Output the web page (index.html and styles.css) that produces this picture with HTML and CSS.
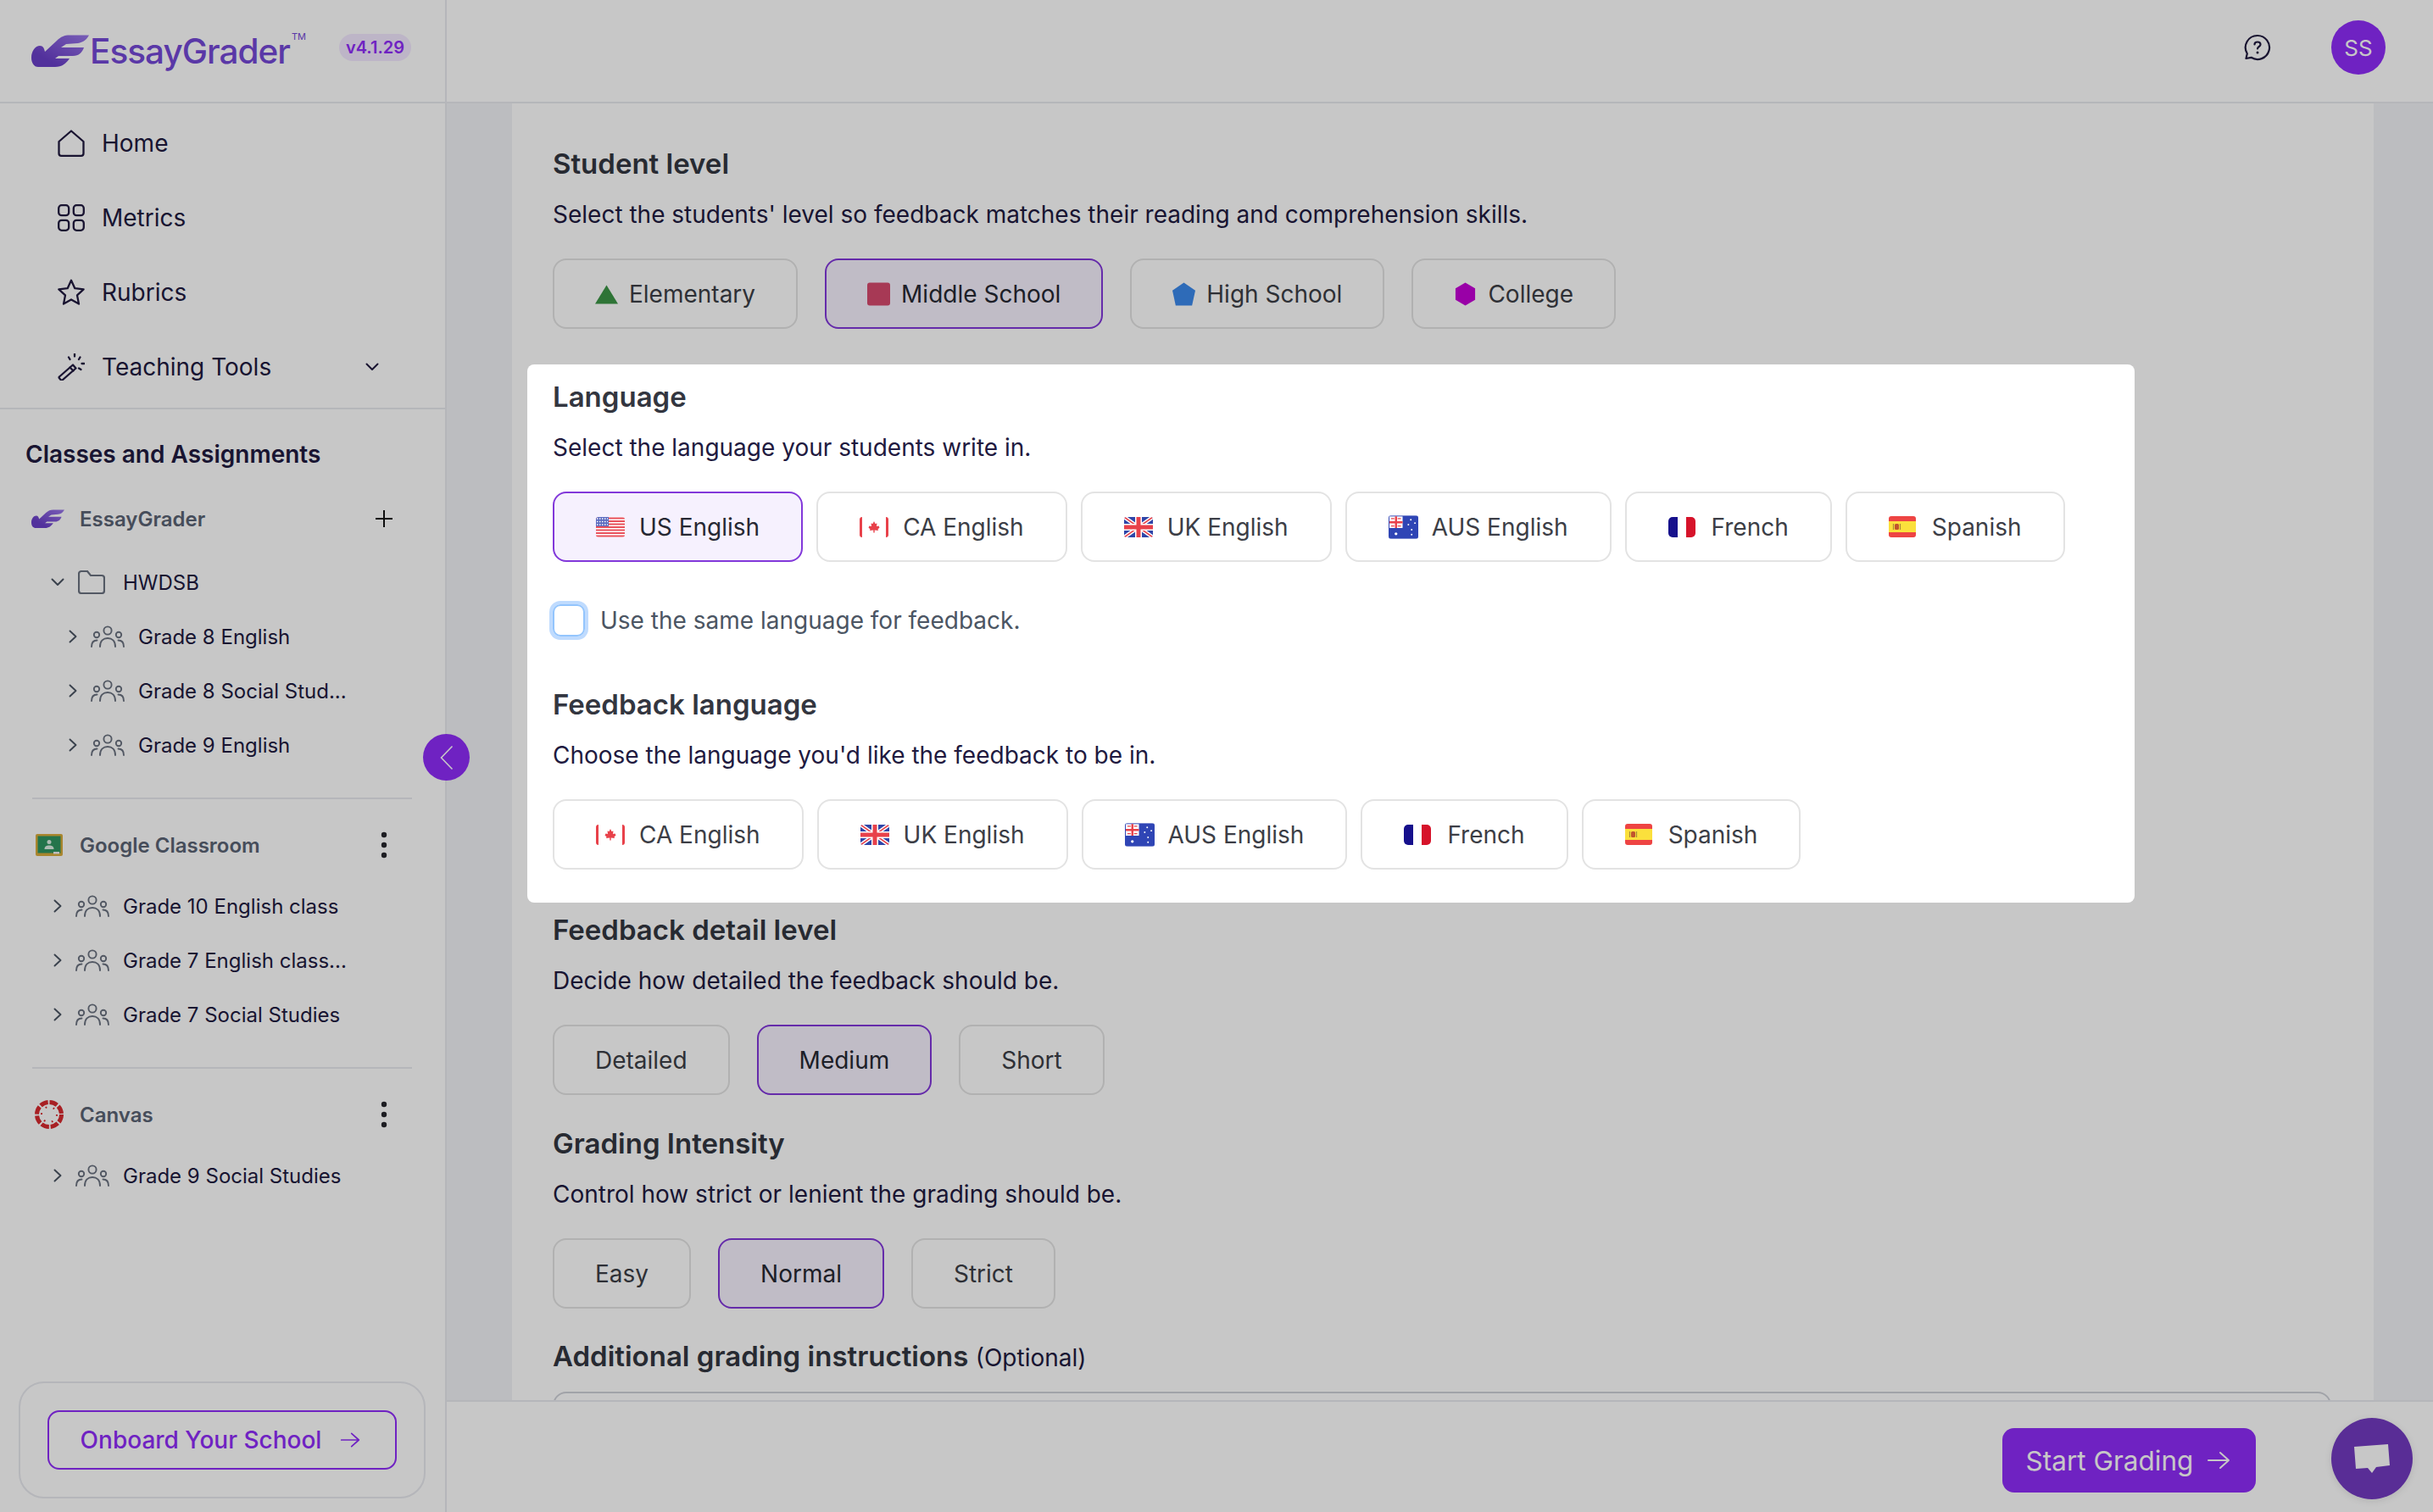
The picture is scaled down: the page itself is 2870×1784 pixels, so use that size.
FILE: index.html
```html
<!DOCTYPE html>
<html lang="en">

<head>
    <meta charset="UTF-8">
    <meta name="viewport" content="width=device-width, initial-scale=1.0">
    <title>EssayGrader</title>
    <link rel="stylesheet" href="styles.css">
</head>

<body>
    <!-- Shared icons -->
    <svg class="icon-defs" aria-hidden="true">
        <defs>
            <linearGradient id="wingFill" x1="0" y1="1" x2="1" y2="0">
                <stop offset="0.25" stop-color="#6a3fc8" />
                <stop offset="0.5" stop-color="#7b52d4" />
                <stop offset="1" stop-color="#9a78ea" />
            </linearGradient>
        </defs>
        <symbol id="wing" viewBox="0 0 68 38">
            <path fill="url(#wingFill)" d="M0 27C0 19 5 13 10 13C14 13 15 16 16 20L30 7C35 2 39 .5 45 .5L68 .5C65 6 61 9 55 10L41 11L35 15L62 15C60 21 56 25 49 25L32 25L28 28L45 28C41 34 36 38 28 38L8 38C3 38 0 33 0 27Z" />
        </symbol>
        <symbol id="group" viewBox="0 0 40 26">
            <g fill="none" stroke="#6b7280" stroke-width="1.9" stroke-linecap="round">
                <circle cx="20" cy="6" r="4.6" />
                <circle cx="7" cy="11" r="3.2" />
                <circle cx="33" cy="11" r="3.2" />
                <path d="M11 25C11 18 15 15 20 15C25 15 29 18 29 25" />
                <path d="M1 25C1 20 3.5 17.5 7.5 17.5" />
                <path d="M39 25C39 20 36.5 17.5 32.500 17.5" />
            </g>
        </symbol>
        <symbol id="chev-right" viewBox="0 0 10 16">
            <path d="M1.500 1.500L8.500 8L1.500 14.500" fill="none" stroke="#4b5563" stroke-width="1.900" stroke-linecap="round" stroke-linejoin="round" />
        </symbol>
        <symbol id="dots" viewBox="0 0 8 32">
            <circle cx="4" cy="4" r="3.200" fill="#26262c" />
            <circle cx="4" cy="16" r="3.200" fill="#26262c" />
            <circle cx="4" cy="28" r="3.200" fill="#26262c" />
        </symbol>
        <symbol id="arrow" viewBox="0 0 28 22">
            <path d="M2 11H26M16 2L26 11L16 20" fill="none" stroke="currentColor" stroke-width="2" stroke-linecap="round" stroke-linejoin="round" />
        </symbol>

        <!-- Flags -->
        <symbol id="flag-us" viewBox="0 0 34 24">
            <rect width="34" height="24" fill="#fff" />
            <path d="M0 1.500H34M0 5H34M0 8.500H34M0 12H34M0 15.500H34M0 19H34M0 22.500H34" stroke="#e8505b" stroke-width="1.800" />
            <rect width="15" height="11" fill="#5b6bc0" />
            <path d="M1 2H14M1 5.500H14M1 9H14" stroke="#fff" stroke-width="1.400" stroke-dasharray="1.500 1.500" />
        </symbol>
        <symbol id="flag-ca" viewBox="0 0 34 24">
            <rect width="34" height="24" fill="#fff" />
            <rect width="3" height="24" fill="#e8414a" />
            <rect x="31" width="3" height="24" fill="#e8414a" />
            <path d="M17 5L18.500 8L20.500 7.500L20 11L22.500 10.500L23.500 12.500L21.500 14.500L22 16L17.700 15.500V18.500H16.300V15.500L12 16L12.500 14.500L10.500 12.500L11.500 10.500L14 11L13.500 7.500L15.500 8Z" fill="#e8414a" />
        </symbol>
        <symbol id="flag-uk" viewBox="0 0 34 24">
            <rect width="34" height="24" fill="#2f45a8" />
            <path d="M0 0L34 24M34 0L0 24" stroke="#fff" stroke-width="4.500" />
            <path d="M0 0L34 24M34 0L0 24" stroke="#e8414a" stroke-width="1.600" />
            <path d="M17 0V24M0 12H34" stroke="#fff" stroke-width="8" />
            <path d="M17 0V24M0 12H34" stroke="#e8414a" stroke-width="5" />
        </symbol>
        <symbol id="flag-aus" viewBox="0 0 36 28">
            <rect width="36" height="28" fill="#2f45b5" />
            <rect x="1" y="1" width="16" height="14" fill="#fff" />
            <path d="M9 1V15M1 8H17" stroke="#e8414a" stroke-width="2.500" />
            <path d="M3 3.500H7M3 12.500H7M11 3.500H15M11 12.500H15" stroke="#e8414a" stroke-width="1.200" />
            <g fill="#fff">
                <circle cx="9" cy="22" r="1.700" />
                <circle cx="27" cy="5" r="1" />
                <circle cx="32" cy="9" r="1" />
                <circle cx="24" cy="11" r="1" />
                <circle cx="28" cy="17" r="1" />
                <circle cx="28" cy="23" r="1" />
            </g>
        </symbol>
        <symbol id="flag-fr" viewBox="0 0 32 24">
            <rect width="11" height="24" fill="#16108c" />
            <rect x="11" width="10" height="24" fill="#fff" />
            <rect x="21" width="11" height="24" fill="#d6132a" />
        </symbol>
        <symbol id="flag-es" viewBox="0 0 32 25">
            <rect width="32" height="25" fill="#ee4443" />
            <rect y="6" width="32" height="13" fill="#fbe03c" />
            <rect x="7" y="9" width="5" height="7" rx="1.500" fill="#c1552d" />
            <path d="M5.500 9V16M13.500 9V16" stroke="#a88a3a" stroke-width="1.200" />
        </symbol>
    </svg>

    <div class="app">
        <!-- Top bar -->
        <header class="topbar">
            <div class="brand">
                <svg class="brand-logo"><use href="#wing" /></svg>
                <span class="brand-name">EssayGrader</span>
                <span class="brand-tm">TM</span>
                <span class="version">v4.1.29</span>
            </div>
            <div class="topbar-right">
                <svg class="help-icon" viewBox="0 0 32 32">
                    <path d="M16 2A14 14 0 1 1 8.500 27.800L2.500 29L3.800 23.200A14 14 0 0 1 16 2Z" fill="none" stroke="#211a3f" stroke-width="2.200" stroke-linejoin="round" />
                    <path d="M12.500 12.500C12.500 10.500 14 9.500 16 9.500C18 9.500 19.500 10.700 19.500 12.500C19.500 15 16 15 16 17.500" fill="none" stroke="#211a3f" stroke-width="2.200" stroke-linecap="round" />
                    <circle cx="16" cy="22" r="1.500" fill="#211a3f" />
                </svg>
                <div class="avatar">SS</div>
            </div>
        </header>

        <div class="workspace">
            <!-- Sidebar -->
            <aside class="sidebar">
                <nav class="nav">
                    <a class="nav-item">
                        <svg class="nav-icon" viewBox="0 0 32 32"><path d="M1.500 14L16 1.500L30.500 14V28A2.800 2.800 0 0 1 27.700 30.800H4.300A2.800 2.800 0 0 1 1.500 28Z" /></svg>
                        Home
                    </a>
                    <a class="nav-item">
                        <svg class="nav-icon" viewBox="0 0 32 32">
                            <rect x="1.200" y="1.200" width="12" height="12" rx="3.500" />
                            <rect x="18.800" y="1.200" width="12" height="12" rx="3.500" />
                            <rect x="1.200" y="18.800" width="12" height="12" rx="3.500" />
                            <rect x="18.800" y="18.800" width="12" height="12" rx="3.500" />
                        </svg>
                        Metrics
                    </a>
                    <a class="nav-item">
                        <svg class="nav-icon" viewBox="0 0 32 32"><path d="M16 1.800L20.300 11.200L30.600 12.400L23 19.400L25 29.600L16 24.500L7 29.600L9 19.400L1.400 12.400L11.700 11.200Z" /></svg>
                        Rubrics
                    </a>
                    <a class="nav-item">
                        <svg class="nav-icon" viewBox="0 0 32 32">
                            <path d="M2 27.500L18 13.500L21.500 17.500L5.500 31.500A1 1 0 0 1 4 31.500L1.800 29A1 1 0 0 1 2 27.500Z" />
                            <path d="M14.500 16.500L18.500 20.500M13 4.500L14.500 7M20 .500V3.500M26.500 4.500L25 7M31.500 12H28.500M27.500 19L25 17.500" />
                        </svg>
                        Teaching Tools
                        <svg class="nav-caret" viewBox="0 0 16 10"><path d="M1.500 1.500L8 8L14.500 1.500" /></svg>
                    </a>
                </nav>

                <h3 class="tree-title">Classes and Assignments</h3>

                <div class="tree-head">
                    <svg class="source-logo wing-small"><use href="#wing" /></svg>
                    <span class="source-name">EssayGrader</span>
                    <svg class="plus" viewBox="0 0 20 20"><path d="M10 0V20M0 10H20" /></svg>
                </div>
                <div class="tree-folder">
                    <svg class="folder-caret" viewBox="0 0 16 10"><path d="M1.500 1.500L8 8L14.500 1.500" /></svg>
                    <svg class="folder-icon" viewBox="0 0 32 28"><path d="M1 4A3 3 0 0 1 4 1H11L15 6H28A3 3 0 0 1 31 9V24A3 3 0 0 1 28 27H4A3 3 0 0 1 1 24Z" /></svg>
                    <span>HWDSB</span>
                </div>
                <div class="tree-row nested">
                    <svg class="row-chev"><use href="#chev-right" /></svg>
                    <svg class="row-group"><use href="#group" /></svg>
                    <span>Grade 8 English</span>
                </div>
                <div class="tree-row nested">
                    <svg class="row-chev"><use href="#chev-right" /></svg>
                    <svg class="row-group"><use href="#group" /></svg>
                    <span>Grade 8 Social Stud...</span>
                </div>
                <div class="tree-row nested">
                    <svg class="row-chev"><use href="#chev-right" /></svg>
                    <svg class="row-group"><use href="#group" /></svg>
                    <span>Grade 9 English</span>
                </div>

                <div class="tree-divider"></div>

                <div class="tree-head">
                    <svg class="source-logo" viewBox="0 0 32 26">
                        <rect width="32" height="26" rx="2" fill="#d9ac3c" />
                        <rect x="2.500" y="2.500" width="27" height="20" fill="#2f9560" />
                        <circle cx="16" cy="9.500" r="2.500" fill="#dff0e6" />
                        <path d="M10.500 18C10.500 14.500 13 13.500 16 13.500C19 13.500 21.500 14.500 21.500 18Z" fill="#dff0e6" />
                        <rect x="21" y="21" width="7" height="2.500" fill="#f3f3f3" />
                    </svg>
                    <span class="source-name">Google Classroom</span>
                    <svg class="dots"><use href="#dots" /></svg>
                </div>
                <div class="tree-row">
                    <svg class="row-chev"><use href="#chev-right" /></svg>
                    <svg class="row-group"><use href="#group" /></svg>
                    <span>Grade 10 English class</span>
                </div>
                <div class="tree-row">
                    <svg class="row-chev"><use href="#chev-right" /></svg>
                    <svg class="row-group"><use href="#group" /></svg>
                    <span>Grade 7 English class...</span>
                </div>
                <div class="tree-row">
                    <svg class="row-chev"><use href="#chev-right" /></svg>
                    <svg class="row-group"><use href="#group" /></svg>
                    <span>Grade 7 Social Studies</span>
                </div>

                <div class="tree-divider"></div>

                <div class="tree-head">
                    <svg class="source-logo canvas-logo" viewBox="0 0 34 34">
                        <circle cx="17" cy="17" r="14.500" fill="none" stroke="#d8292f" stroke-width="5" stroke-dasharray="9.500 1.900" />
                        <circle cx="17" cy="17" r="9" fill="none" stroke="#d8292f" stroke-width="2" stroke-dasharray="1.800 7.600" />
                    </svg>
                    <span class="source-name">Canvas</span>
                    <svg class="dots"><use href="#dots" /></svg>
                </div>
                <div class="tree-row">
                    <svg class="row-chev"><use href="#chev-right" /></svg>
                    <svg class="row-group"><use href="#group" /></svg>
                    <span>Grade 9 Social Studies</span>
                </div>

                <div class="onboard-card">
                    <button class="onboard-btn">
                        Onboard Your School
                        <svg class="onboard-arrow"><use href="#arrow" /></svg>
                    </button>
                </div>
            </aside>

            <!-- Collapse handle on the sidebar edge -->
            <button class="collapse-btn">
                <svg viewBox="0 0 16 30"><path d="M14.500 1.500L1.500 15L14.500 28.500" /></svg>
            </button>

            <main class="main">
                <div class="scroll-area">
                    <div class="card">
                        <section class="section section-level">
                            <h2>Student level</h2>
                            <p>Select the students' level so feedback matches their reading and comprehension skills.</p>
                            <div class="options">
                                <button class="option">
                                    <svg class="shape" viewBox="0 0 28 28"><path d="M14 3L28 26H0Z" fill="#3c9546" /></svg>
                                    Elementary
                                </button>
                                <button class="option selected">
                                    <svg class="shape" viewBox="0 0 28 28"><rect width="28" height="28" rx="3" fill="#d74a6d" /></svg>
                                    Middle School
                                </button>
                                <button class="option">
                                    <svg class="shape" viewBox="0 0 28 28"><path d="M14 0L28 9.500L24 28H4L0 9.500Z" fill="#3c89ec" /></svg>
                                    High School
                                </button>
                                <button class="option">
                                    <svg class="shape" viewBox="0 0 28 28"><path d="M14 0L26 7V21L14 28L2 21V7Z" fill="#c500d7" /></svg>
                                    College
                                </button>
                            </div>
                        </section>

                        <!-- Highlighted by the tour, sits above the dim layer -->
                        <section class="spotlight">
                            <h2>Language</h2>
                            <p>Select the language your students write in.</p>
                            <div class="options lang-options">
                                <button class="option selected"><svg class="flag"><use href="#flag-us" /></svg>US English</button>
                                <button class="option"><svg class="flag"><use href="#flag-ca" /></svg>CA English</button>
                                <button class="option"><svg class="flag"><use href="#flag-uk" /></svg>UK English</button>
                                <button class="option"><svg class="flag flag-aus"><use href="#flag-aus" /></svg>AUS English</button>
                                <button class="option"><svg class="flag flag-fr"><use href="#flag-fr" /></svg>French</button>
                                <button class="option"><svg class="flag flag-es"><use href="#flag-es" /></svg>Spanish</button>
                            </div>
                            <label class="same-lang">
                                <span class="checkbox"></span>
                                Use the same language for feedback.
                            </label>
                            <h2 class="feedback-lang">Feedback language</h2>
                            <p>Choose the language you'd like the feedback to be in.</p>
                            <div class="options lang-options">
                                <button class="option"><svg class="flag"><use href="#flag-ca" /></svg>CA English</button>
                                <button class="option"><svg class="flag"><use href="#flag-uk" /></svg>UK English</button>
                                <button class="option"><svg class="flag flag-aus"><use href="#flag-aus" /></svg>AUS English</button>
                                <button class="option"><svg class="flag flag-fr"><use href="#flag-fr" /></svg>French</button>
                                <button class="option"><svg class="flag flag-es"><use href="#flag-es" /></svg>Spanish</button>
                            </div>
                        </section>

                        <section class="section">
                            <h2>Feedback detail level</h2>
                            <p>Decide how detailed the feedback should be.</p>
                            <div class="options">
                                <button class="option">Detailed</button>
                                <button class="option selected">Medium</button>
                                <button class="option">Short</button>
                            </div>
                        </section>

                        <section class="section section-intensity">
                            <h2>Grading Intensity</h2>
                            <p>Control how strict or lenient the grading should be.</p>
                            <div class="options">
                                <button class="option">Easy</button>
                                <button class="option selected">Normal</button>
                                <button class="option">Strict</button>
                            </div>
                        </section>

                        <section class="section">
                            <h2>Additional grading instructions <span class="optional">(Optional)</span></h2>
                            <div class="textarea"></div>
                        </section>
                    </div>
                </div>

                <footer class="footer">
                    <button class="start-btn">
                        Start Grading
                        <svg class="start-arrow"><use href="#arrow" /></svg>
                    </button>
                </footer>
            </main>
        </div>
    </div>

    <button class="chat-btn">
        <svg viewBox="0 0 42 34"><path d="M0 3L40 0L42 25L26 27L21 34L16 28L2 29Z" /></svg>
    </button>

    <div class="dim"></div>
</body>

</html>
```

FILE: styles.css
```css
/* General Reset */
* {
    margin: 0;
    padding: 0;
    box-sizing: border-box;
}

body {
    font-family: 'Inter', 'Liberation Sans', sans-serif;
    background-color: #fff;
    color: #211a3f;
    height: 100vh;
    overflow: hidden;
}

button {
    font-family: inherit;
    background: none;
    border: none;
}

.icon-defs {
    position: absolute;
    width: 0;
    height: 0;
}

/* Dim layer for the tour */
.dim {
    position: fixed;
    inset: 0;
    background: rgba(0, 0, 0, 0.22);
    z-index: 5;
}

.app {
    display: flex;
    flex-direction: column;
    height: 100vh;
}

/* Top bar */
.topbar {
    display: flex;
    justify-content: space-between;
    align-items: center;
    height: 122px;
    flex-shrink: 0;
    border-bottom: 2px solid #e8e9ef;
    padding-right: 56px;
}

.brand {
    display: flex;
    align-items: center;
    width: 527px;
    height: 120px;
    padding-left: 37px;
    border-right: 2px solid #e8e9ef;
}

.brand-logo {
    width: 68px;
    height: 38px;
}

.brand-name {
    font-size: 40.5px;
    font-weight: 500;
    letter-spacing: -1px;
    color: #7448d7;
    margin-left: 1px;
}

.brand-tm {
    align-self: flex-start;
    width: 16px;
    margin: 38px 0 0 2px;
    font-size: 11px;
    line-height: 11px;
    color: #7448d7;
}

.version {
    margin: 0 0 8px 40px;
    padding: 0 8px;
    height: 32px;
    line-height: 32px;
    border-radius: 16px;
    background: #f3e8ff;
    color: #8f2cf9;
    font-size: 20px;
    font-weight: 600;
}

.topbar-right {
    display: flex;
    align-items: center;
    gap: 71px;
    margin-bottom: 8px;
}

.help-icon {
    width: 32px;
    height: 32px;
}

.avatar {
    width: 64px;
    height: 64px;
    border-radius: 50%;
    background: #8f2cf9;
    color: #fff;
    font-size: 26px;
    display: flex;
    justify-content: center;
    align-items: center;
}

.workspace {
    display: flex;
    flex: 1;
    min-height: 0;
    position: relative;
}

/* Sidebar */
.sidebar {
    display: flex;
    flex-direction: column;
    width: 527px;
    flex-shrink: 0;
    border-right: 2px solid #e8e9ef;
    font-size: 24px;
}

.nav {
    padding: 3px 0 4px;
    border-bottom: 2px solid #e8e9ef;
}

.nav-item {
    display: flex;
    align-items: center;
    height: 88px;
    padding-left: 68px;
    font-size: 28px;
}

.nav-icon {
    width: 32px;
    height: 32px;
    margin-right: 20px;
    fill: none;
    stroke: #211a3f;
    stroke-width: 2.3;
    stroke-linejoin: round;
    stroke-linecap: round;
}

.nav-caret {
    width: 16px;
    height: 10px;
    margin-left: auto;
    margin-right: 78px;
    fill: none;
    stroke: #211a3f;
    stroke-width: 2;
    stroke-linecap: round;
    stroke-linejoin: round;
}

.tree-title {
    font-size: 28px;
    font-weight: 600;
    line-height: 40px;
    margin: 33px 0 0 30px;
}

.tree-head {
    display: flex;
    align-items: center;
    height: 64px;
    padding-left: 42px;
    margin-top: 22px;
}

.tree-title + .tree-head {
    margin-top: 24px;
    padding-left: 37px;
}

.source-logo {
    width: 32px;
    height: 26px;
    flex-shrink: 0;
}

.wing-small {
    width: 39px;
    height: 22px;
}

.canvas-logo {
    width: 34px;
    height: 34px;
    margin-left: -1px;
}

.source-name {
    position: relative;
    font-weight: 600;
    color: #5a6374;
    margin-left: 20px;
    flex: 1;
}

.wing-small + .source-name {
    margin-left: 18px;
}

.canvas-logo + .source-name {
    margin-left: 19px;
}

.plus {
    width: 20px;
    height: 20px;
    margin-right: 62px;
    fill: none;
    stroke: #111;
    stroke-width: 2;
}

.dots {
    width: 8px;
    height: 32px;
    margin-right: 68px;
}

.tree-folder {
    display: flex;
    align-items: center;
    height: 64px;
    margin-top: 11px;
    padding-left: 60px;
}

.folder-caret {
    width: 16px;
    height: 10px;
    fill: none;
    stroke: #4b5563;
    stroke-width: 2;
    stroke-linecap: round;
    stroke-linejoin: round;
}

.folder-icon {
    width: 32px;
    height: 28px;
    margin: 0 21px 0 16px;
    fill: none;
    stroke: #6b7280;
    stroke-width: 2.2;
}

.tree-row {
    display: flex;
    align-items: center;
    height: 64px;
    padding-left: 63px;
}

.tree-head + .tree-row {
    margin-top: 8px;
}

.tree-row.nested {
    padding-left: 81px;
}

.row-chev {
    width: 10px;
    height: 16px;
}

.row-group {
    width: 40px;
    height: 26px;
    margin: 0 16px;
}

.tree-divider {
    height: 2px;
    background: #e8e9ef;
    margin: 30px 39px 0 38px;
}

/* Onboard card */
.onboard-card {
    margin: auto 23px 16px 22px;
    padding: 32px;
    border: 2px solid #e8e9ef;
    border-radius: 30px;
}

.onboard-btn {
    display: flex;
    justify-content: center;
    align-items: center;
    gap: 22px;
    width: 100%;
    height: 70px;
    padding-right: 4px;
    border: 2px solid #8f2cf9;
    border-radius: 14px;
    color: #8f2cf9;
    font-size: 28px;
    font-weight: 500;
}

.onboard-arrow {
    width: 24px;
    height: 20px;
}

.collapse-btn {
    position: absolute;
    left: 499px;
    top: 744px;
    width: 55px;
    height: 55px;
    border-radius: 50%;
    background: #8f2cf9;
    display: flex;
    justify-content: center;
    align-items: center;
}

.collapse-btn svg {
    width: 16px;
    height: 30px;
    fill: none;
    stroke: #fff;
    stroke-width: 1.6;
}

/* Main */
.main {
    flex: 1;
    min-width: 0;
    display: flex;
    flex-direction: column;
    background: #f1f2f7;
}

.scroll-area {
    flex: 1;
    min-height: 0;
    overflow: hidden;
}

.card {
    width: 2196px;
    margin-left: 77px;
    min-height: 100%;
    padding: 51px 50px 0 48px;
    background: #fff;
}

.section h2,
.spotlight h2 {
    font-size: 33px;
    font-weight: 600;
    line-height: 40px;
    color: #333640;
}

.section p,
.spotlight p {
    font-size: 28px;
    line-height: 40px;
    margin-top: 20px;
    color: #211a3f;
}

.optional {
    font-size: 28px;
    font-weight: 400;
    color: #211a3f;
}

.section {
    margin-bottom: 37px;
}

.section-level {
    margin-bottom: 42px;
}

.section-intensity {
    margin-bottom: 36px;
}

.options {
    display: flex;
    gap: 32px;
    margin-top: 32px;
}

.lang-options {
    gap: 16px;
}

.option {
    display: flex;
    align-items: center;
    height: 83px;
    padding: 0 48px;
    border: 2px solid #e3e3e3;
    border-radius: 16px;
    font-size: 28px;
    color: #3c3e46;
    background: #fff;
}

.option.selected {
    border-color: #8238da;
    background: #f6f1fe;
    color: #262833;
}

.shape {
    width: 27px;
    height: 28px;
    margin-right: 13px;
}

.lang-options .option {
    padding: 0 49px;
}

.flag {
    width: 34px;
    height: 24px;
    margin-right: 17px;
    border-radius: 3px;
}

.flag-aus {
    width: 35px;
    height: 28px;
    margin-right: 16px;
}

.flag-fr {
    width: 32px;
    margin-right: 19px;
    border-radius: 5px;
}

.flag-es {
    width: 32px;
    height: 25px;
    margin-right: 19px;
}

/* Highlighted section */
.spotlight {
    position: relative;
    z-index: 10;
    width: 1896px;
    margin: 0 0 12px -30px;
    padding: 18px 30px 39px;
    border-radius: 8px;
    background: #fff;
}

.same-lang {
    display: flex;
    align-items: center;
    gap: 18px;
    margin-top: 50px;
    font-size: 28px;
    color: #4b5563;
}

.checkbox {
    width: 38px;
    height: 38px;
    border: 2px solid #93c5fd;
    border-radius: 9px;
    box-shadow: 0 0 0 4px #bfdbfe;
}

.spotlight .feedback-lang {
    margin-top: 60px;
}

.textarea {
    height: 200px;
    margin-top: 20px;
    border: 2px solid #cfd1d8;
    border-radius: 16px;
}

/* Footer */
.footer {
    display: flex;
    justify-content: flex-end;
    height: 132px;
    flex-shrink: 0;
    padding: 31px 209px 0 0;
    background: #fff;
    border-top: 2px solid #e8e9ef;
}

.start-btn {
    display: flex;
    align-items: center;
    justify-content: center;
    gap: 16px;
    width: 299px;
    height: 76px;
    padding-right: 2px;
    border-radius: 14px;
    background: #8f2cf9;
    color: #fff;
    font-size: 31.5px;
}

.start-arrow {
    width: 28px;
    height: 22px;
}

.chat-btn {
    position: fixed;
    right: 24px;
    bottom: 15px;
    width: 96px;
    height: 96px;
    border-radius: 50%;
    background: #733ac0;
    box-shadow: 0 2px 8px rgba(0, 0, 0, 0.1);
    display: flex;
    justify-content: center;
    align-items: center;
}

.chat-btn svg {
    width: 42px;
    height: 34px;
    fill: #fff;
}
```
